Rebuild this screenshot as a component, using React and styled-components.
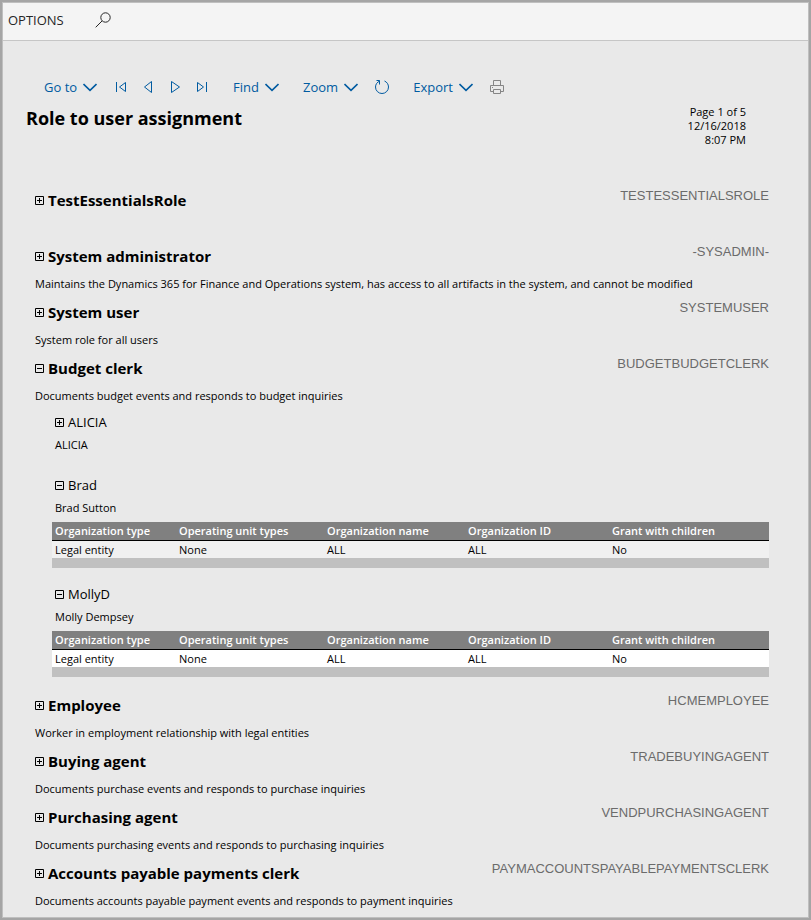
import React, { useState } from "react";
import styled, { createGlobalStyle } from "styled-components";

const GlobalStyle = createGlobalStyle`
  * { box-sizing: border-box; }
  body {
    margin: 0;
    background: #e9e9e9;
    color: #000;
    font-family: "Open Sans", "Noto Sans", sans-serif;
    font-size: 11px;
  }
  h1, h2, h3, p { margin: 0; }
  button {
    padding: 0;
    border: 0;
    background: none;
    color: inherit;
    font: inherit;
    cursor: pointer;
  }
  svg { display: block; flex: none; }
`;

const Frame = styled.div`
  min-height: 100vh;
  border: 2px solid #a5a5a5;
`;

const Inner = styled.div`
  min-height: calc(100vh - 4px);
  border: 1px solid #bfbfbf;
`;

const ActionBar = styled.header`
  display: flex;
  align-items: center;
  gap: 31px;
  height: 38px;
  padding: 0 5px 3px;
  background: #f4f4f4;
  border-bottom: 1px solid #c6c6c6;
  color: #262626;
`;

const ActionTab = styled.button`
  font-size: 13px;
  line-height: 20px;
`;

const Report = styled.main`
  padding: 34px 39px 0 23px;
`;

const Toolbar = styled.div`
  display: flex;
  align-items: center;
  gap: 24px;
  height: 24px;
  padding-left: 18px;
  color: #005ba1;
`;

const ToolGroup = styled.div`
  display: flex;
  align-items: center;
  gap: ${(p) => (p.$tight ? 13 : 17)}px;
`;

const MenuButton = styled.button`
  display: flex;
  align-items: center;
  gap: 6px;
  font-size: 13px;
  line-height: 20px;
`;

const ToolButton = styled.button`
  color: ${(p) => (p.$muted ? "#858585" : "inherit")};
`;

const ReportHeader = styled.div`
  display: flex;
  justify-content: space-between;
  align-items: flex-start;
  height: 87px;
  padding: 6px 23px 0 0;
`;

const ReportTitle = styled.h1`
  font-size: 18px;
  font-weight: 700;
  line-height: 26px;
`;

const PageInfo = styled.div`
  text-align: right;
  line-height: 14px;
`;

const RoleBlock = styled.section`
  padding-left: 9px;
`;

const RoleHead = styled.div`
  display: flex;
  justify-content: space-between;
  height: 28px;
`;

const RoleTitle = styled.h2`
  display: flex;
  align-items: center;
  gap: 4px;
  font-size: 15px;
  font-weight: 700;
  line-height: 20px;
`;

const RoleCode = styled.span`
  color: #6b6b6b;
  font-family: "Liberation Sans", Arial, sans-serif;
  font-size: 13px;
  line-height: 20px;
`;

const Description = styled.p`
  height: 28px;
  line-height: 28px;
`;

const UserList = styled.div`
  padding: 1px 0 14px 17px;
`;

const UserBlock = styled.div`
  & + & {
    margin-top: 15px;
  }
`;

const UserTitle = styled.h3`
  display: flex;
  align-items: center;
  gap: 4px;
  height: 22px;
  padding-left: 3px;
  font-size: 13px;
  font-weight: 400;
`;

const UserName = styled.p`
  padding: 0 0 2px 3px;
  line-height: 24px;
`;

const Table = styled.table`
  width: 100%;
  border-collapse: separate;
  border-spacing: 0;
  table-layout: fixed;
  text-align: left;
`;

const HeadCell = styled.th`
  width: ${(p) => p.$width};
  height: 19px;
  padding: 0 0 0 3px;
  border-bottom: 1px solid #000;
  background: #808080;
  color: #fff;
  font-weight: 600;
  line-height: 18px;
`;

const Cell = styled.td`
  height: 17px;
  padding: 0 0 0 3px;
  background: ${(p) => p.$fill};
  line-height: 17px;
`;

const FootCell = styled.td`
  height: 10px;
  padding: 0;
  background: #c0c0c0;
`;

const Chevron = () => (
  <svg width="14" height="14" viewBox="0 0 14 14" fill="none" stroke="currentColor" strokeWidth="1.6">
    <path d="M.5 4 7 10.3 13.5 4" />
  </svg>
);

const navPaths = {
  first: "M2.5 2V12M11.5 2.5V11.5L5.5 7Z",
  previous: "M10.5 1.5V12.5L3.5 7Z",
  next: "M3.5 1.5V12.5L11.5 7Z",
  last: "M11.5 2V12M2.5 2.5V11.5L8.5 7Z",
};

const NavIcon = ({ kind }) => (
  <svg width="14" height="14" viewBox="0 0 14 14" fill="none" stroke="currentColor">
    <path d={navPaths[kind]} />
  </svg>
);

const RefreshIcon = () => (
  <svg width="14" height="14" viewBox="0 0 14 14" fill="none" stroke="currentColor">
    <path d="M4.5 1.2C2.2 2 .5 4.4.5 7a6.5 6.5 0 0 0 13 0c0-2.7-1.7-5.1-4-6M1.5.5H4.5V4.5" />
  </svg>
);

const PrintIcon = () => (
  <svg width="14" height="14" viewBox="0 0 14 14" fill="none" stroke="currentColor">
    <path d="M3.5 5.5V.5H10.5V5.5M3.5 11.5H.5V5.5H13.5V11.5H10.5M3.5 9.5H10.5V13.5H3.5Z" />
    <path d="M2 7.5H3" />
  </svg>
);

const SearchIcon = () => (
  <svg width="16" height="16" viewBox="0 0 16 16" fill="none" stroke="currentColor">
    <circle cx="10.5" cy="5.5" r="4.7" />
    <path d="M7 9 .7 15.3" />
  </svg>
);

const Toggle = ({ open, onToggle, label }) => (
  <button type="button" aria-expanded={open} aria-label={label} onClick={onToggle}>
    <svg width="9" height="9" viewBox="0 0 9 9" fill="none" stroke="#000">
      <path d="M.5.5H8.5V8.5H.5Z" />
      <path d={open ? "M2 4.5H7" : "M2 4.5H7M4.5 2V7"} />
    </svg>
  </button>
);

const columns = [
  ["Organization type", "124px"],
  ["Operating unit types", "148px"],
  ["Organization name", "141px"],
  ["Organization ID", "144px"],
  ["Grant with children", "auto"],
];

const grant = ["Legal entity", "None", "ALL", "ALL", "No"];

const roles = [
  { name: "TestEssentialsRole", code: "TESTESSENTIALSROLE", text: "" },
  {
    name: "System administrator",
    code: "-SYSADMIN-",
    text: "Maintains the Dynamics 365 for Finance and Operations system, has access to all artifacts in the system, and cannot be modified",
  },
  { name: "System user", code: "SYSTEMUSER", text: "System role for all users" },
  {
    name: "Budget clerk",
    code: "BUDGETBUDGETCLERK",
    text: "Documents budget events and responds to budget inquiries",
    users: [
      { id: "ALICIA", name: "ALICIA" },
      { id: "Brad", name: "Brad Sutton", fill: "#f0f0f0", grant },
      { id: "MollyD", name: "Molly Dempsey", fill: "#fff", grant },
    ],
  },
  { name: "Employee", code: "HCMEMPLOYEE", text: "Worker in employment relationship with legal entities" },
  { name: "Buying agent", code: "TRADEBUYINGAGENT", text: "Documents purchase events and responds to purchase inquiries" },
  { name: "Purchasing agent", code: "VENDPURCHASINGAGENT", text: "Documents purchasing events and responds to purchasing inquiries" },
  {
    name: "Accounts payable payments clerk",
    code: "PAYMACCOUNTSPAYABLEPAYMENTSCLERK",
    text: "Documents accounts payable payment events and responds to payment inquiries",
  },
];

function GrantTable({ row, fill }) {
  return (
    <Table>
      <thead>
        <tr>
          {columns.map(([name, width]) => (
            <HeadCell key={name} scope="col" $width={width}>{name}</HeadCell>
          ))}
        </tr>
      </thead>
      <tbody>
        <tr>
          {row.map((value, i) => (
            <Cell key={i} $fill={fill}>{value}</Cell>
          ))}
        </tr>
      </tbody>
      <tfoot>
        <tr>
          <FootCell colSpan={columns.length} />
        </tr>
      </tfoot>
    </Table>
  );
}

function User({ user }) {
  const [open, setOpen] = useState(Boolean(user.grant));
  return (
    <UserBlock>
      <UserTitle>
        <Toggle open={open} onToggle={() => setOpen(!open)} label={`Toggle ${user.id}`} />
        {user.id}
      </UserTitle>
      <UserName>{user.name}</UserName>
      {open && user.grant && <GrantTable row={user.grant} fill={user.fill} />}
    </UserBlock>
  );
}

function Role({ role }) {
  const [open, setOpen] = useState(Boolean(role.users));
  return (
    <RoleBlock>
      <RoleHead>
        <RoleTitle>
          <Toggle open={open} onToggle={() => setOpen(!open)} label={`Toggle ${role.name}`} />
          {role.name}
        </RoleTitle>
        <RoleCode>{role.code}</RoleCode>
      </RoleHead>
      <Description>{role.text}</Description>
      {open && role.users && (
        <UserList>
          {role.users.map((user) => <User key={user.id} user={user} />)}
        </UserList>
      )}
    </RoleBlock>
  );
}

const Menu = ({ children }) => (
  <MenuButton type="button" aria-haspopup="menu">
    {children}
    <Chevron />
  </MenuButton>
);

export default function App() {
  return (
    <Frame>
      <GlobalStyle />
      <Inner>
        <ActionBar>
          <ActionTab type="button">OPTIONS</ActionTab>
          <button type="button" aria-label="Search"><SearchIcon /></button>
        </ActionBar>
        <Report>
          <Toolbar role="toolbar" aria-label="Report">
            <ToolGroup>
              <Menu>Go to</Menu>
              <ToolGroup $tight>
                {Object.keys(navPaths).map((kind) => (
                  <ToolButton key={kind} type="button" aria-label={`${kind} page`}>
                    <NavIcon kind={kind} />
                  </ToolButton>
                ))}
              </ToolGroup>
            </ToolGroup>
            <Menu>Find</Menu>
            <ToolGroup>
              <Menu>Zoom</Menu>
              <ToolButton type="button" aria-label="Refresh"><RefreshIcon /></ToolButton>
            </ToolGroup>
            <ToolGroup>
              <Menu>Export</Menu>
              <ToolButton type="button" aria-label="Print" $muted><PrintIcon /></ToolButton>
            </ToolGroup>
          </Toolbar>
          <ReportHeader>
            <ReportTitle>Role to user assignment</ReportTitle>
            <PageInfo>
              <p>Page 1 of 5</p>
              <p>12/16/2018</p>
              <p>8:07 PM</p>
            </PageInfo>
          </ReportHeader>
          {roles.map((role) => <Role key={role.name} role={role} />)}
        </Report>
      </Inner>
    </Frame>
  );
}
